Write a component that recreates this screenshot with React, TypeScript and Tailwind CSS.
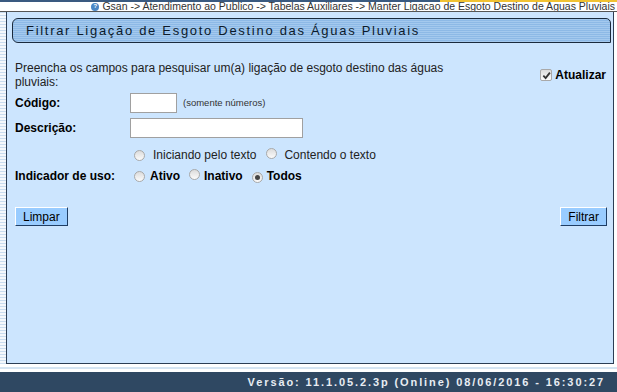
import React from "react";

const font = "font-['Liberation_Sans',Arial,sans-serif]";

function Radio({ checked = false }: { checked?: boolean }) {
  return (
    <span className="inline-flex h-[11px] w-[11px] shrink-0 items-center justify-center rounded-full border border-[#a9a9a9] bg-[linear-gradient(to_bottom,#dcdcdc,#fbfbfb)]">
      {checked && <span className="h-[5px] w-[5px] rounded-full bg-[#444]" />}
    </span>
  );
}

function Checkbox() {
  return (
    <span className="inline-flex h-[12px] w-[12px] items-center justify-center rounded-[2px] border border-[#a9a9a9] bg-[linear-gradient(to_bottom,#dcdcdc,#fbfbfb)]">
      <svg width="9" height="9" viewBox="0 0 10 10">
        <path d="M1.5 5.2 L4 7.8 L8.8 1.8" fill="none" stroke="#333" strokeWidth="2" />
      </svg>
    </span>
  );
}

function Button({ label }: { label: string }) {
  return (
    <button className="h-[19px] border-[1.5px] border-t-white border-l-white border-r-[#1f3d63] border-b-[#1f3d63] bg-[#99ccff] px-[7px] text-[12px] leading-none text-black">
      {label}
    </button>
  );
}

export default function App() {
  return (
    <div className={`${font} flex h-[392px] w-[617px] flex-col overflow-hidden bg-white`}>
      {/* top strip */}
      <div className="flex h-[2px]">
        <div className="w-[440px] bg-[#3a5a80]" />
        <div className="flex-1 bg-[#f1c232]" />
      </div>

      {/* breadcrumb */}
      <div className="flex h-[9px] items-center justify-end gap-[3px] pr-[2px] text-[10.5px] leading-[9px] text-[#333]">
        <span className="flex h-[8px] w-[8px] items-center justify-center rounded-full bg-[#4a86c5] text-[6px] font-bold text-white">?</span>
        <span>Gsan -&gt; Atendimento ao Publico -&gt; Tabelas Auxiliares -&gt; Manter Ligacao de Esgoto Destino de Aguas Pluviais</span>
      </div>

      <div className="flex flex-1 border-t border-[#555]">
        {/* left stripes */}
        <div className="w-[6px] bg-[repeating-linear-gradient(to_bottom,#c9dcef_0px,#c9dcef_1px,#f4f8fc_1px,#f4f8fc_3px)]" />

        {/* main panel */}
        <div className="mr-[3px] flex flex-1 flex-col border-x border-b border-[#2c3e55] bg-[#cce5fe] pt-[6px]">
          <div className="ml-[5px] mr-[2px] flex h-[25px] items-center rounded-l-[6px] rounded-tr-[5px] border border-[#1a2a3d] bg-[repeating-linear-gradient(to_bottom,#a4c9ee_0px,#a4c9ee_1px,#8db9e6_1px,#8db9e6_2px)] pl-[13px] text-[13px] tracking-[1.7px] text-[#0b1a2b]">
            Filtrar Ligação de Esgoto Destino das Águas Pluviais
          </div>

          <div className="flex flex-col pl-[8px] pr-[6px] pt-[18px] text-[12px] leading-[14px] text-[#222]">
            <div className="flex items-start justify-between">
              <p className="w-[445px]">
                Preencha os campos para pesquisar um(a) ligação de esgoto destino das águas pluviais:
              </p>
              <label className="mt-[7px] mr-[1px] flex items-center gap-[3px] text-[12px] font-bold text-black">
                <Checkbox />
                Atualizar
              </label>
            </div>

            <div className="mt-[4px] flex items-center">
              <span className="w-[115px] font-bold text-black">Código:</span>
              <span className="h-[20px] w-[47px] border border-[#a0a0a0] bg-white" />
              <span className="ml-[6px] text-[9.5px] text-[#333]">(somente números)</span>
            </div>

            <div className="mt-[5px] flex items-center">
              <span className="w-[115px] font-bold text-black">Descrição:</span>
              <span className="h-[20px] w-[173px] border border-[#a0a0a0] bg-white" />
            </div>

            <div className="mt-[10px] flex items-center pl-[119px] text-[12px] text-[#222]">
              <Radio />
              <span className="ml-[8px]">Iniciando pelo texto</span>
              <span className="ml-[10px]"><Radio /></span>
              <span className="ml-[7px]">Contendo o texto</span>
            </div>

            <div className="mt-[7px] flex items-center">
              <span className="w-[119px] font-bold text-black">Indicador de uso:</span>
              <Radio />
              <span className="ml-[5px] font-bold text-black">Ativo</span>
              <span className="ml-[9px]"><Radio /></span>
              <span className="ml-[4px] font-bold text-black">Inativo</span>
              <span className="ml-[9px]"><Radio checked /></span>
              <span className="ml-[4px] font-bold text-black">Todos</span>
            </div>

            <div className="mt-[24px] flex items-center justify-between">
              <Button label="Limpar" />
              <Button label="Filtrar" />
            </div>
          </div>
        </div>
      </div>

      {/* separator */}
      <div className="h-[8px] bg-white py-[3px]">
        <div className="h-[2px] bg-[#d4e4f2]" />
      </div>

      {/* footer */}
      <div className="flex h-[20px] items-center justify-end bg-[#2f4862] pr-[12px] text-[11px] font-bold tracking-[1.9px] text-[#e8edf3]">
        Versão: 11.1.05.2.3p (Online) 08/06/2016 - 16:30:27
      </div>
    </div>
  );
}
